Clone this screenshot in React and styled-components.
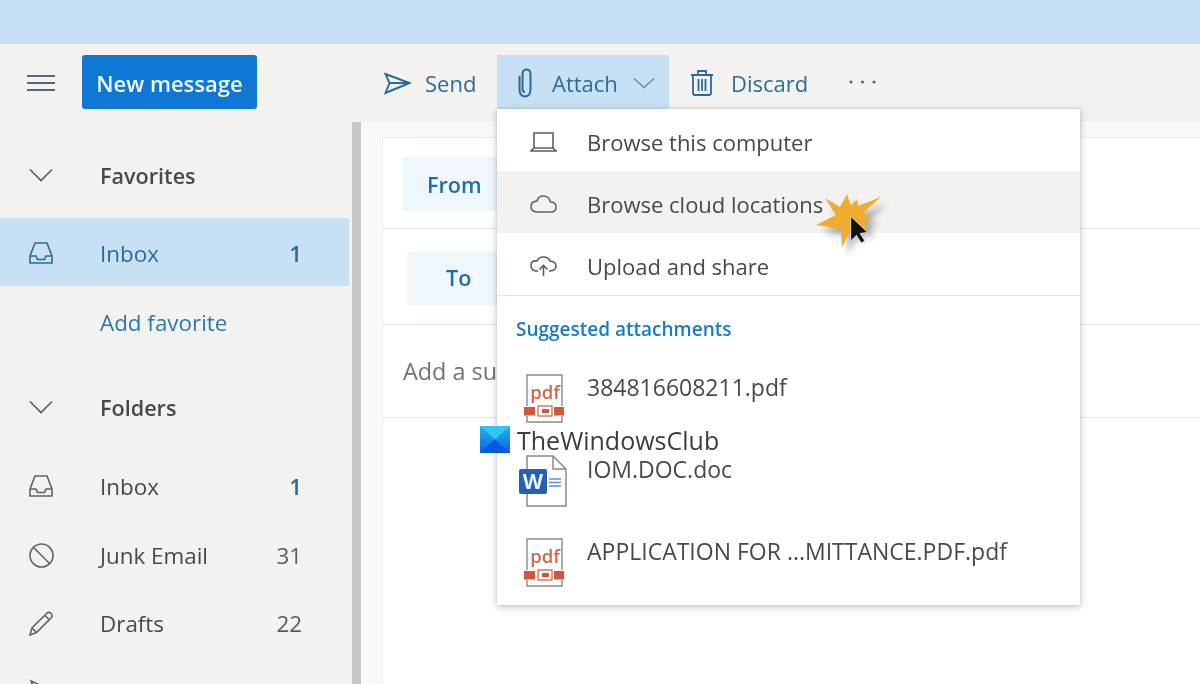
import React from "react";
import styled, { createGlobalStyle } from "styled-components";

const Global = createGlobalStyle`
  html, body { margin: 0; padding: 0; background: #faf9f8; }
  * { box-sizing: border-box; }
  #root { width: 1200px; height: 684px; overflow: hidden; }
`;

const Page = styled.div`
  position: relative;
  width: 1200px;
  height: 684px;
  overflow: hidden;
  display: flex;
  flex-direction: column;
  font-family: "Open Sans", "Noto Sans", sans-serif;
  font-size: 22.4px;
  color: #4a4947;
  background: #faf9f8;
  filter: blur(0.45px);
`;
const TopBar = styled.div`
  height: 44px;
  flex: none;
  background: #c7e0f4;
`;
const Toolbar = styled.div`
  height: 78px;
  flex: none;
  display: flex;
  background: #f3f2f1;
  border-top: 1px solid #faf9f8;
`;
const ToolbarLeft = styled.div`
  width: 382px;
  flex: none;
  display: flex;
  align-items: center;
  padding-left: 27px;
`;
const HamburgerSlot = styled.div`
  display: flex;
  margin-bottom: 2px;
`;
const NewMessage = styled.button`
  margin-left: 27px;
  margin-top: -3px;
  width: 175px;
  height: 54px;
  border: 0;
  border-radius: 3px;
  background: #0f78d4;
  color: #f2f9ff;
  font: 600 22px "Open Sans", sans-serif;
  padding: 2px 0 0;
`;
const Actions = styled.div`
  display: flex;
  align-items: flex-start;
  padding-top: 10px;
  font-size: 22px;
`;
const Action = styled.div`
  height: 54px;
  display: flex;
  align-items: center;
  color: #2b6c96;
  padding: ${(p) => p.$pad || "0"};
  background: ${(p) => (p.$active ? "#c7e0f4" : "transparent")};
  gap: ${(p) => p.$gap || 14}px;
  width: ${(p) => (p.$w ? p.$w + "px" : "auto")};
`;
const ChevronSlot = styled.span`
  display: flex;
  margin-left: -5px;
`;
const More = styled.div`
  margin-left: 41px;
  height: 54px;
  display: flex;
  align-items: center;
  color: #2b6c96;
`;
const Body = styled.div`
  flex: 1;
  display: flex;
  min-height: 0;
`;
const Nav = styled.nav`
  width: 352px;
  flex: none;
  background: #f3f2f1;
  padding-top: 19px;
  padding-right: 3px;
`;
const NavRow = styled.div`
  height: ${(p) => p.$h || 68}px;
  flex: none;
  margin-bottom: ${(p) => p.$mb || 0}px;
  display: flex;
  align-items: center;
  padding: ${(p) => (p.$selected ? "2px" : "0")} 47px 0 29px;
  background: ${(p) => (p.$selected ? "#c7e0f4" : "transparent")};
  color: ${(p) => (p.$selected ? "#2b6c96" : "#4a4947")};
`;
const NavIcon = styled.div`
  width: 71px;
  flex: none;
  display: flex;
  align-items: center;
`;
const NavLabel = styled.span`
  flex: 1;
  font-size: ${(p) => (p.$bold ? "21.6px" : "inherit")};
  font-weight: ${(p) => (p.$bold ? 600 : 400)};
  color: ${(p) => (p.$link ? "#2f77aa" : "inherit")};
`;
const Count = styled.span`
  color: ${(p) => p.$color || "#5e5c5a"};
  font-weight: ${(p) => (p.$bold ? 600 : 400)};
`;
const Scrollbar = styled.div`
  width: 9px;
  flex: none;
  background: #c8c6c4;
`;
const Gutter = styled.div`
  width: 21px;
  flex: none;
`;
const Main = styled.main`
  flex: 1;
  padding-top: 15px;
  min-width: 0;
`;
const Card = styled.div`
  height: 100%;
  background: #fff;
  border-left: 1px solid #edebe9;
  border-top: 1px solid #edebe9;
`;
const FieldRow = styled.div`
  height: ${(p) => p.$h}px;
  display: flex;
  align-items: center;
  padding-left: ${(p) => p.$pad}px;
  border-bottom: 1px solid #e6e4e2;
  color: #75726f;
`;
const SubjectHint = styled.span`
  font-size: 23.4px;
  white-space: nowrap;
`;
const FieldButton = styled.div`
  width: ${(p) => p.$w}px;
  height: 54px;
  margin-top: ${(p) => p.$mt || 0}px;
  display: flex;
  align-items: center;
  padding-left: ${(p) => p.$textPad}px;
  background: #eff6fc;
  color: #1f6ea6;
  font-size: 21.6px;
  font-weight: 600;
`;
const Menu = styled.div`
  position: absolute;
  left: 497px;
  top: 109px;
  width: 583px;
  height: 496px;
  background: #fff;
  font-size: 22px;
  box-shadow: 0 2px 8px rgba(0, 0, 0, 0.22), 0 0 3px rgba(0, 0, 0, 0.12);
  display: flex;
  flex-direction: column;
`;
const MenuItem = styled.div`
  height: 62px;
  flex: none;
  display: flex;
  align-items: center;
  padding: 3px 0 0 33px;
  gap: 30px;
  background: ${(p) => (p.$hover ? "#f3f2f1" : "transparent")};
`;
const MenuDivider = styled.div`
  height: 1px;
  flex: none;
  background: #e6e4e2;
`;
const Suggested = styled.div`
  height: 61px;
  flex: none;
  display: flex;
  align-items: center;
  padding: 4px 0 0 19px;
  font-size: 19px;
  font-weight: 600;
  color: #1a7cc0;
`;
const FileRow = styled.div`
  height: 82px;
  flex: none;
  display: flex;
  align-items: flex-start;
  padding-left: ${(p) => p.$pad}px;
  gap: ${(p) => p.$gap}px;
  padding-top: ${(p) => p.$top}px;
`;
const FileName = styled.span`
  margin-top: ${(p) => p.$mt}px;
  font-size: 23px;
  line-height: 30px;
  white-space: nowrap;
`;
const Watermark = styled.div`
  position: absolute;
  left: 480px;
  top: 425px;
  display: flex;
  align-items: center;
  font-size: 25px;
  color: #3d3d3d;
  height: 29px;
`;
const WatermarkText = styled.span`
  margin-left: 6px;
  text-shadow: 0 0 1px #fff;
`;
const Burst = styled.svg`
  position: absolute;
  left: 805px;
  top: 185px;
`;

const stroke = { fill: "none", stroke: "currentColor", strokeWidth: 1.6 };

const Icon = ({ w = 26, h = 26, color, children }) => (
  <svg width={w} height={h} viewBox={`0 0 ${w} ${h}`} style={{ color, flex: "none" }} {...stroke}>
    {children}
  </svg>
);

const Hamburger = () => (
  <Icon w={28} h={18} color="#4f6a80">
    <path d="M0 2h28M0 9h28M0 16h28" strokeWidth="1.9" />
  </Icon>
);
const Chevron = ({ color = "#5e5c5a" }) => (
  <Icon w={24} h={14} color={color}>
    <path d="M1 1.500 12 12.500 23 1.500" />
  </Icon>
);
const InboxIcon = ({ color = "#65635f" }) => (
  <Icon w={24} h={22} color={color}>
    <path d="M1 21h22v-7L18 1H6L1 14zM1 14h6l1.500 3.500h7L17 14h6" />
  </Icon>
);
const JunkIcon = () => (
  <Icon w={25} h={25} color="#65635f">
    <circle cx="12.500" cy="12.500" r="11.500" />
    <path d="M4.500 4.500l16 16" />
  </Icon>
);
const PencilIcon = () => (
  <Icon w={25} h={25} color="#65635f">
    <path d="M1 24l2-7L18 2q2-1.500 4 .5t.5 4L7.500 21.500zM3 17l5 5M16 4.500l4.500 4.500" />
  </Icon>
);
const SentIcon = () => (
  <Icon w={26} h={24} color="#65635f">
    <path d="M2 2l22 10L2 22l4-10zM6 12h18" />
  </Icon>
);
const SendIcon = () => (
  <Icon w={27} h={23} color="#2b6c96">
    <path d="M1.500 2 25.500 11 1.500 21l4-10zM5.500 11h20" strokeWidth="1.900" />
  </Icon>
);
const ClipIcon = () => (
  <Icon w={14} h={30} color="#2b6c96">
    <path d="M1.500 8v13q0 7.500 5.500 7.500t5.500-7.500V6.500Q12.500 1.500 8.500 1.500t-4 5v14.500q0 3 2.500 3" strokeWidth="2" />
  </Icon>
);
const TrashIcon = () => (
  <Icon w={22} h={26} color="#2b6c96">
    <path d="M2 5h18v18q0 2-2 2H4q-2 0-2-2zM0 5h22M7 5V1h8v4M7.500 9v12M11 9v12M14.500 9v12" strokeWidth="1.800" />
  </Icon>
);
const SmallChevron = () => (
  <Icon w={22} h={12} color="#5d8fb3">
    <path d="M1 1.500 11 10.500 21 1.500" />
  </Icon>
);
const DotsIcon = () => (
  <svg width="27" height="4" viewBox="0 0 27 4" fill="currentColor">
    <circle cx="2" cy="2" r="1.500" />
    <circle cx="13.500" cy="2" r="1.500" />
    <circle cx="25" cy="2" r="1.500" />
  </svg>
);
const LaptopIcon = () => (
  <Icon w={27} h={20} color="#5f5d5b">
    <path d="M4 1h19v15H4zM4 16 1 19h25l-3-3" />
  </Icon>
);
const CloudIcon = () => (
  <Icon w={27} h={18} color="#65635f">
    <path d="M7 17h14q5 0 5-5t-5.500-5Q19 1 13.500 1T7 6Q1 6.500 1 11.500T7 17z" />
  </Icon>
);
const UploadIcon = () => (
  <Icon w={27} h={20} color="#5f5d5b">
    <path d="M8 15H7q-6 0-6-5.500T7 5q1.500-4 6.500-4T20 5q6 .5 6 5t-6 5h-1M13.500 20V10M9.500 13.500l4-4 4 4" />
  </Icon>
);
const PdfIcon = () => (
  <svg width="42" height="49" viewBox="0 0 42 49" style={{ flex: "none" }}>
    <path d="M4 32V1h35v31M4 42v6h35v-6" fill="none" stroke="#8c8a88" strokeWidth="1.400" />
    <text x="22" y="25" textAnchor="middle" fontFamily="Open Sans, sans-serif" fontWeight="600" fontSize="18.500" fill="#d0674a">pdf</text>
    <rect x="1" y="33" width="11" height="8.500" fill="#d0573a" />
    <rect x="31" y="33" width="10" height="8.500" fill="#d0573a" />
    <rect x="15" y="32" width="14" height="10" fill="#fff" stroke="#c96a52" strokeWidth="1.300" />
    <rect x="19" y="35" width="7" height="4" fill="#d0573a" />
  </svg>
);
const WordIcon = () => (
  <svg width="49" height="53" viewBox="0 0 49 53" style={{ flex: "none" }}>
    <path d="M9 2h26l13 13v37H9z" fill="#fff" stroke="#8c8a88" strokeWidth="1.500" />
    <path d="M35 2v13h13" fill="none" stroke="#8c8a88" strokeWidth="1.500" />
    <rect x="1" y="15" width="28" height="25" rx="2" fill="#2460b8" />
    <path d="M31 25h12M31 28.500h12M31 32h12" stroke="#5b93cc" strokeWidth="1.500" />
    <text x="15" y="35" textAnchor="middle" fontFamily="Open Sans, sans-serif" fontWeight="700" fontSize="21" fill="#eef4fb">W</text>
  </svg>
);
const WinLogo = () => (
  <svg width="31" height="28" viewBox="0 0 31 28" style={{ flex: "none" }}>
    <defs>
      <linearGradient id="winA" x1="0" y1="0" x2="0" y2="1">
        <stop offset="0" stopColor="#22b8ef" />
        <stop offset="1" stopColor="#0a5fe0" />
      </linearGradient>
    </defs>
    <rect width="30" height="27" fill="url(#winA)" />
    <path d="M0 0h30L15 13.500z" fill="#35c3f4" />
    <path d="M0 27h30L15 13.500z" fill="#0b58e0" />
  </svg>
);
const burstPoints =
  "42,9 46,21 52,14 53,21 76,12 58,28 66,32 59,36 63,47 54,42 50,52 46,44 37,62 36,44 11,40 31,30 20,13 35,22";
const CursorBurst = () => (
  <Burst width="90" height="75" viewBox="0 0 90 75">
    <defs>
      <filter id="sh" x="-30%" y="-30%" width="170%" height="170%">
        <feGaussianBlur stdDeviation="3" />
      </filter>
    </defs>
    <polygon points={burstPoints} fill="#555" opacity=".45" transform="translate(6 7)" filter="url(#sh)" />
    <polygon points={burstPoints} fill="#f0ac2c" />
    <path d="M46 33V59L52 53 57 61 61 59 56 51 64 50z" transform="translate(2 0) scale(.95)" fill="#111" stroke="#fff" strokeWidth=".8" />
  </Burst>
);

const files = [
  { name: "384816608211.pdf", icon: <PdfIcon />, pad: 26, gap: 22, top: 17, mt: -2 },
  { name: "IOM.DOC.doc", icon: <WordIcon />, pad: 21, gap: 20, top: 15, mt: 0 },
  { name: "APPLICATION FOR ...MITTANCE.PDF.pdf", icon: <PdfIcon />, pad: 26, gap: 22, top: 17, mt: -2 },
];

export default function App() {
  return (
    <Page>
      <Global />
      <TopBar />
      <Toolbar>
        <ToolbarLeft>
          <HamburgerSlot>
            <Hamburger />
          </HamburgerSlot>
          <NewMessage>New message</NewMessage>
        </ToolbarLeft>
        <Actions>
          <Action $w={115} $gap={14} $pad="2px 0 0 2px">
            <SendIcon />
            <span>Send</span>
          </Action>
          <Action $active $w={172} $pad="2px 0 0 21px" $gap={20}>
            <ClipIcon />
            <span>Attach</span>
            <ChevronSlot>
              <SmallChevron />
            </ChevronSlot>
          </Action>
          <Action $pad="2px 0 0 22px" $gap={18}>
            <TrashIcon />
            <span>Discard</span>
          </Action>
          <More>
            <DotsIcon />
          </More>
        </Actions>
      </Toolbar>
      <Body>
        <Nav>
          <NavRow $h={68} $mb={9}>
            <NavIcon>
              <Chevron />
            </NavIcon>
            <NavLabel $bold>Favorites</NavLabel>
          </NavRow>
          <NavRow $selected>
            <NavIcon>
              <InboxIcon color="#2b6c96" />
            </NavIcon>
            <NavLabel>Inbox</NavLabel>
            <Count $color="#2b6c96" $bold>1</Count>
          </NavRow>
          <NavRow $h={72} $mb={15}>
            <NavIcon />
            <NavLabel $link>Add favorite</NavLabel>
          </NavRow>
          <NavRow $mb={11}>
            <NavIcon>
              <Chevron />
            </NavIcon>
            <NavLabel $bold>Folders</NavLabel>
          </NavRow>
          <NavRow $mb={1}>
            <NavIcon>
              <InboxIcon />
            </NavIcon>
            <NavLabel>Inbox</NavLabel>
            <Count $color="#2b6c96" $bold>1</Count>
          </NavRow>
          <NavRow>
            <NavIcon>
              <JunkIcon />
            </NavIcon>
            <NavLabel>Junk Email</NavLabel>
            <Count>31</Count>
          </NavRow>
          <NavRow>
            <NavIcon>
              <PencilIcon />
            </NavIcon>
            <NavLabel>Drafts</NavLabel>
            <Count>22</Count>
          </NavRow>
          <NavRow>
            <NavIcon>
              <SentIcon />
            </NavIcon>
          </NavRow>
        </Nav>
        <Scrollbar />
        <Gutter />
        <Main>
          <Card>
            <FieldRow $h={91} $pad={19}>
              <FieldButton $w={130} $textPad={25} $mt={2}>From</FieldButton>
            </FieldRow>
            <FieldRow $h={96} $pad={24}>
              <FieldButton $w={120} $textPad={39} $mt={2}>To</FieldButton>
            </FieldRow>
            <FieldRow $h={93} $pad={20}>
              <SubjectHint>Add a subject</SubjectHint>
            </FieldRow>
          </Card>
        </Main>
      </Body>
      <Menu>
        <MenuItem>
          <LaptopIcon />
          <span>Browse this computer</span>
        </MenuItem>
        <MenuItem $hover>
          <CloudIcon />
          <span>Browse cloud locations</span>
        </MenuItem>
        <MenuItem>
          <UploadIcon />
          <span>Upload and share</span>
        </MenuItem>
        <MenuDivider />
        <Suggested>Suggested attachments</Suggested>
        {files.map((f) => (
          <FileRow key={f.name} $pad={f.pad} $gap={f.gap} $top={f.top}>
            {f.icon}
            <FileName $mt={f.mt}>{f.name}</FileName>
          </FileRow>
        ))}
      </Menu>
      <Watermark>
        <WinLogo />
        <WatermarkText>TheWindowsClub</WatermarkText>
      </Watermark>
      <CursorBurst />
    </Page>
  );
}
